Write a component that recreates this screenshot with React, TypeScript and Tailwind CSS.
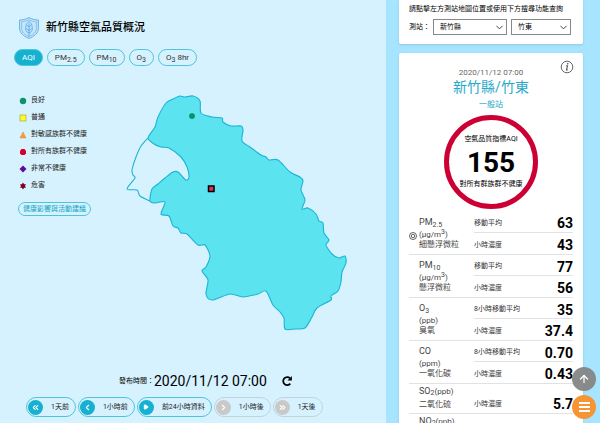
import React, { useState } from 'react';
import { ArrowUp, ChevronDown, ChevronLeft, ChevronRight, ChevronsLeft, ChevronsRight, Play } from 'lucide-react';

type Point = [number, number];

const COUNTY: Point[] = [
  [148, 138], [155, 127], [158, 117], [166, 103], [173, 99], [180, 96], [185, 97], [193, 96], [200, 101], [201, 113],
  [212, 117], [222, 118], [223, 122], [231, 126], [241, 126], [243, 130], [242, 141], [250, 147], [261, 155],
  [266, 157], [269, 160], [278, 160], [290, 172], [300, 177], [303, 181], [301, 190], [305, 200], [302, 209],
  [308, 208], [316, 214], [319, 221], [323, 223], [324, 233], [329, 240], [326, 245], [332, 254], [339, 258],
  [345, 256], [346, 263], [342, 272], [341, 282], [338, 291], [331, 296], [331, 300], [317, 308], [312, 317],
  [305, 328], [295, 329], [285, 329], [284, 318], [280, 312], [273, 305], [266, 291], [258, 294], [243, 297],
  [230, 294], [212, 300], [206, 294], [208, 280], [202, 271], [206, 267], [210, 256], [205, 245], [198, 245],
  [187, 234], [181, 233], [178, 228], [173, 226], [169, 216], [161, 214], [165, 202], [155, 203], [150, 201],
  [152, 189], [158, 184], [165, 178], [173, 172], [178, 172], [186, 180], [189, 177], [187, 167], [181, 157],
  [169, 148], [161, 147], [154, 144],
];

const CITY: Point[] = [
  [148, 138], [141, 146], [136, 157], [132, 170], [133, 175], [135, 178], [127, 189], [137, 190], [140, 196],
  [150, 201],
];

// Catmull-Rom spline through the points, written as cubic segments
function smoothPath(points: Point[], closed: boolean) {
  const n = points.length;
  const at = (i: number) => (closed ? points[(i + n) % n] : points[Math.max(0, Math.min(n - 1, i))]);
  let d = `M${points[0][0]} ${points[0][1]}`;
  const last = closed ? n : n - 1;
  for (let i = 0; i < last; i++) {
    const [p0, p1, p2, p3] = [at(i - 1), at(i), at(i + 1), at(i + 2)];
    d += ` C${p1[0] + (p2[0] - p0[0]) / 7} ${p1[1] + (p2[1] - p0[1]) / 7}`;
    d += ` ${p2[0] - (p3[0] - p1[0]) / 7} ${p2[1] - (p3[1] - p1[1]) / 7} ${p2[0]} ${p2[1]}`;
  }
  return closed ? d + 'Z' : d;
}

const LEGEND = [
  { label: '良好', shape: <circle cx="5" cy="5" r="3" fill="#009865" stroke="#0a7d5c" strokeWidth=".5" /> },
  { label: '普通', shape: <rect x="2" y="2" width="6" height="6" fill="#fffb26" stroke="#a8ad3c" strokeWidth=".7" /> },
  { label: '對敏感族群不健康', shape: <path d="M5 2 8 8H2Z" fill="#ff9933" stroke="#c98a4a" strokeWidth=".5" /> },
  { label: '對所有族群不健康', shape: <path d="M3.5 2h3L8 4v2.5L6.5 8h-3L2 6.500V4Z" fill="#d4002d" /> },
  { label: '非常不健康', shape: <path d="M5 1.500 8.500 5 5 8.500 1.500 5Z" fill="#5f0a9c" /> },
  { label: '危害', shape: <path d="m5 1.500 1.100 1.700H8L7 5l1 1.800H6.100L5 8.500 3.900 6.800H2L3 5 2 3.200h1.900Z" fill="#7e0023" /> },
];

const TABS = [
  { id: 'aqi', label: <>AQI</> },
  { id: 'pm25', label: <>PM<Sub>2.5</Sub></> },
  { id: 'pm10', label: <>PM<Sub>10</Sub></> },
  { id: 'o3', label: <>O<Sub>3</Sub></> },
  { id: 'o38', label: <>O<Sub>3</Sub> 8hr</> },
];

const STEPS = [
  { label: '1天前', icon: ChevronsLeft, enabled: true },
  { label: '1小時前', icon: ChevronLeft, enabled: true },
  { label: '前24小時資料', icon: Play, enabled: true },
  { label: '1小時後', icon: ChevronRight, enabled: false },
  { label: '1天後', icon: ChevronsRight, enabled: false },
];

interface Pollutant {
  id: string;
  name: React.ReactNode;
  unit: React.ReactNode;
  zh?: string;
  rows: [string, string][];
  main?: boolean;
  inline?: boolean;
}

const UG = <>(μg/m<sup className="top-[-3px] text-[7px]">3</sup>)</>;

const POLLUTANTS: Pollutant[] = [
  { id: 'pm25', name: <>PM<Sub>2.5</Sub></>, unit: UG, zh: '細懸浮微粒', main: true, rows: [['移動平均', '63'], ['小時濃度', '43']] },
  { id: 'pm10', name: <>PM<Sub>10</Sub></>, unit: UG, zh: '懸浮微粒', rows: [['移動平均', '77'], ['小時濃度', '56']] },
  { id: 'o3', name: <>O<Sub>3</Sub></>, unit: '(ppb)', zh: '臭氧', rows: [['8小時移動平均', '35'], ['小時濃度', '37.4']] },
  { id: 'co', name: 'CO', unit: '(ppm)', zh: '一氧化碳', rows: [['8小時移動平均', '0.70'], ['小時濃度', '0.43']] },
  { id: 'so2', name: <>SO<Sub>2</Sub></>, unit: '(ppb)', zh: '二氧化硫', inline: true, rows: [['小時濃度', '5.7']] },
  { id: 'no2', name: <>NO<Sub>2</Sub></>, unit: '(ppb)', inline: true, rows: [['', '']] },
];

function Sub({ children }: { children: React.ReactNode }) {
  return <sub className="text-[7px]">{children}</sub>;
}

function ShieldLogo() {
  return (
    <svg viewBox="0 0 20 22" className="h-[22px] w-5" fill="none" stroke="#5ea9e6" strokeWidth=".9">
      <path d="M10 .6C7 2.200 4 3 .6 3v8c0 5 4 8.500 9.400 10.400C15.400 19.500 19.400 16 19.400 11V3C16 3 13 2.200 10 .6Z" fill="#c4e6fb" />
      <path d="M10 2.800C7.500 4 5 4.700 2.600 4.800V11c0 4 3 6.800 7.400 8.400 4.400-1.600 7.400-4.400 7.400-8.400V4.800C15 4.700 12.500 4 10 2.800Z" strokeWidth=".6" />
      <path d="M10 4.500c2 1.500 3.300 3.300 3 5 1.300 3-.5 6-3 6.500-2.500-.5-4.300-3.500-3-6.500-.3-1.700 1-3.500 3-5Z" />
      <path d="M10 6.500V20M10 10 7.800 8.200M10 10l2.200-1.800M10 13.500l-2.800-2M10 13.500l2.800-2" />
    </svg>
  );
}

function CountyMap() {
  return (
    <svg viewBox="120 90 236 245" className="h-[245px] w-[236px]" role="img" aria-label="新竹縣">
      <g stroke="#1cb4d2" strokeWidth="1.1" strokeLinejoin="round">
        <path d={smoothPath(CITY, false)} fill="none" />
        <path d={smoothPath(COUNTY, true)} fill="#5be3f0" />
      </g>
      <circle cx="192" cy="116" r="2.600" fill="#009865" stroke="#087c62" strokeWidth=".6" />
      <rect x="208.500" y="186" width="5.500" height="5.500" fill="#f0294f" stroke="#000" strokeWidth="1.500" />
    </svg>
  );
}

function MapPanel() {
  const [tab, setTab] = useState('aqi');

  return (
    <main className="flex min-w-0 flex-1 flex-col bg-[#d6f2ff] pt-4 pb-[6px]">
      <header className="flex h-6 items-center gap-[7px] pl-[19px]">
        <ShieldLogo />
        <h1 className="text-[11px] leading-6 font-medium">新竹縣空氣品質概況</h1>
      </header>

      <div className="mt-[9px] flex gap-1 pl-[14px]">
        {TABS.map((t) => (
          <button
            key={t.id}
            onClick={() => setTab(t.id)}
            className={`h-[17px] rounded-full border border-[#4cc5dc] px-[7px] text-[8px] leading-[15px] ${
              tab === t.id ? 'bg-[#16b0d0] text-white' : 'text-[#333]'
            }`}
          >
            {t.label}
          </button>
        ))}
      </div>

      <div className="mt-6 flex">
        <div className="ml-[18px] w-[102px] shrink-0 pt-[2px]">
          <ul>
            {LEGEND.map((item) => (
              <li key={item.label} className="flex h-[17px] items-center gap-[3px] text-[7px] text-[#222]">
                <svg viewBox="0 0 10 10" className="size-[10px]">{item.shape}</svg>
                {item.label}
              </li>
            ))}
          </ul>
          <button className="mt-[1px] h-[14px] rounded-full border border-[#4cc5dc] px-1 text-[7px] leading-3 text-[#16a5c4]">
            健康影響與活動建議
          </button>
        </div>
        <CountyMap />
      </div>

      <div className="mt-auto flex h-5 items-center pl-[119px]">
        <span className="text-[7px]">發布時間：</span>
        <time className="text-[14px] leading-5">2020/11/12 07:00</time>
        <button aria-label="重新整理" className="ml-[14px]">
          <svg viewBox="0 0 12 12" className="size-3" fill="none" stroke="#000" strokeWidth="1.800">
            <path d="M9.300 8.600A4 4 0 1 1 9 3.200" />
            <path d="M10.900 1v4.400H6.500Z" fill="#000" stroke="none" />
          </svg>
        </button>
      </div>

      <div className="mt-[6px] flex gap-[2px] pl-[26px]">
        {STEPS.map(({ label, icon: Icon, enabled }) => (
          <button
            key={label}
            disabled={!enabled}
            className={`flex h-5 items-center gap-2 rounded-full border pr-[6px] pl-[1px] text-[7px] text-[#222] ${
              enabled ? 'border-[#4cc5dc]' : 'border-[#c3d3d9]'
            }`}
          >
            <span className={`flex size-[15px] items-center justify-center rounded-full text-white ${enabled ? 'bg-[#16b0d0]' : 'bg-[#c9c9c9]'}`}>
              <Icon size={Icon === Play ? 6 : 9} strokeWidth={3} fill={Icon === Play ? 'currentColor' : 'none'} />
            </span>
            {label}
          </button>
        ))}
      </div>
    </main>
  );
}

function Select({ label, value, className }: { label: string; value: string; className: string }) {
  return (
    <span className={`relative ${className}`}>
      <select aria-label={label} defaultValue={value} className="h-4 w-full appearance-none border border-[#888] bg-white pl-[6px] text-[7px] leading-[14px]">
        <option>{value}</option>
      </select>
      <ChevronDown size={11} strokeWidth={2} className="pointer-events-none absolute top-[3px] right-[2px] text-[#333]" />
    </span>
  );
}

function PollutantRows({ item }: { item: Pollutant }) {
  return (
    <tbody className="border-b border-[#e2e2e2]">
      {item.rows.map(([label, value], i) => (
        <tr key={label} className={item.inline ? 'h-[30px]' : i === 0 ? 'h-[21px]' : 'h-[22px]'}>
          {i === 0 && (
            <>
              <td rowSpan={item.rows.length} className="w-[10px] pt-2">
                {item.main && (
                  <svg viewBox="0 0 8 8" className="size-2" fill="none" stroke="#222" strokeWidth=".7">
                    <circle cx="4" cy="4" r="3.500" />
                    <circle cx="4" cy="4" r="1.700" />
                  </svg>
                )}
              </td>
              <th
                rowSpan={item.rows.length}
                scope="rowgroup"
                className={`text-left text-[9px] leading-[10px] font-normal text-[#444] ${item.inline ? 'pt-[2px] align-top' : 'pt-[2px] align-middle'}`}
              >
                {item.inline ? (
                  <div className="mb-[3px]">{item.name}<span className="text-[8px]">{item.unit}</span></div>
                ) : (
                  <>
                    <div className="mb-[3px]">{item.name}</div>
                    <div className="text-[8px]">{item.unit}</div>
                  </>
                )}
                <div className="text-[8px]">{item.zh}</div>
              </th>
            </>
          )}
          <td className={`w-[60px] text-[7px] text-[#333] ${i > 0 ? 'border-t border-[#e2e2e2]' : ''} ${item.inline ? 'pt-3' : 'pt-1'}`}>{label}</td>
          <td className={`w-[39px] text-right text-[14px] leading-4 font-bold ${i > 0 ? 'border-t border-[#e2e2e2]' : ''} ${item.inline ? 'pt-3' : 'pt-1'}`}>
            {value}
          </td>
        </tr>
      ))}
    </tbody>
  );
}

function StationPanel() {
  return (
    <aside className="flex w-[214px] shrink-0 flex-col gap-[9px] bg-[#a6e4ff] pr-[17px] pl-[13px]">
      <section className="h-11 shrink-0 rounded-b-[2px] bg-white pt-1 pl-[10px] shadow-sm">
        <p className="text-[7px] leading-[11px] whitespace-nowrap">請點擊左方測站地圖位置或使用下方搜尋功能查詢</p>
        <div className="mt-1 flex items-center text-[7px]">
          <span className="w-6">測站：</span>
          <Select label="縣市" value="新竹縣" className="h-4 w-[74px]" />
          <Select label="測站" value="竹東" className="ml-1 h-4 w-[60px]" />
        </div>
      </section>

      <section className="relative rounded-t-[2px] bg-white px-[10px] pt-[14px] shadow-sm">
        <button aria-label="說明" className="absolute top-[7px] right-[9px]">
          <svg viewBox="0 0 14 14" className="size-[14px]" fill="none" stroke="#555">
            <circle cx="7" cy="7" r="5.800" strokeWidth=".9" />
            <path d="M6.200 5.800h1.300L6.500 10h1.300" strokeWidth="1.100" />
            <circle cx="7.700" cy="3.800" r=".8" fill="#555" stroke="none" />
          </svg>
        </button>
        <div className="text-center">
          <time className="block text-[8px] leading-3 text-[#666]">2020/11/12 07:00</time>
          <h2 className="text-[14px] leading-4 text-[#27a9c9]">新竹縣/竹東</h2>
          <p className="mt-1 text-[8px] leading-3 text-[#27a9c9]">一般站</p>
        </div>
        <div className="mx-auto mt-1 flex size-[94px] flex-col items-center rounded-full border-5 border-[#cc0033] pt-[14px] text-[7px] leading-[10px] whitespace-nowrap">
          <span>空氣品質指標AQI</span>
          <strong className="mt-[5px] mb-[3px] text-[28px] leading-[27px] font-bold">155</strong>
          <span>對所有群族群不健康</span>
        </div>

        <table className="mt-[2px] w-full border-collapse">
          {POLLUTANTS.map((item) => (
            <PollutantRows key={item.id} item={item} />
          ))}
        </table>
      </section>
    </aside>
  );
}

export default function App() {
  return (
    <div className="flex h-screen overflow-hidden font-['Roboto','Noto_Sans_CJK_TC',sans-serif] text-black">
      <MapPanel />
      <StationPanel />

      <div className="fixed right-1 bottom-1 flex flex-col gap-1">
        <button aria-label="回到頂端" className="flex size-6 items-center justify-center rounded-full bg-[#858585]/95 text-white">
          <ArrowUp size={12} strokeWidth={2.5} />
        </button>
        <button aria-label="選單" className="flex size-6 flex-col items-center justify-center gap-[2px] rounded-full bg-[#f79433]">
          <span className="h-[2px] w-[11px] bg-white" />
          <span className="h-[2px] w-[11px] bg-white" />
          <span className="h-[2px] w-[11px] bg-white" />
        </button>
      </div>
    </div>
  );
}
